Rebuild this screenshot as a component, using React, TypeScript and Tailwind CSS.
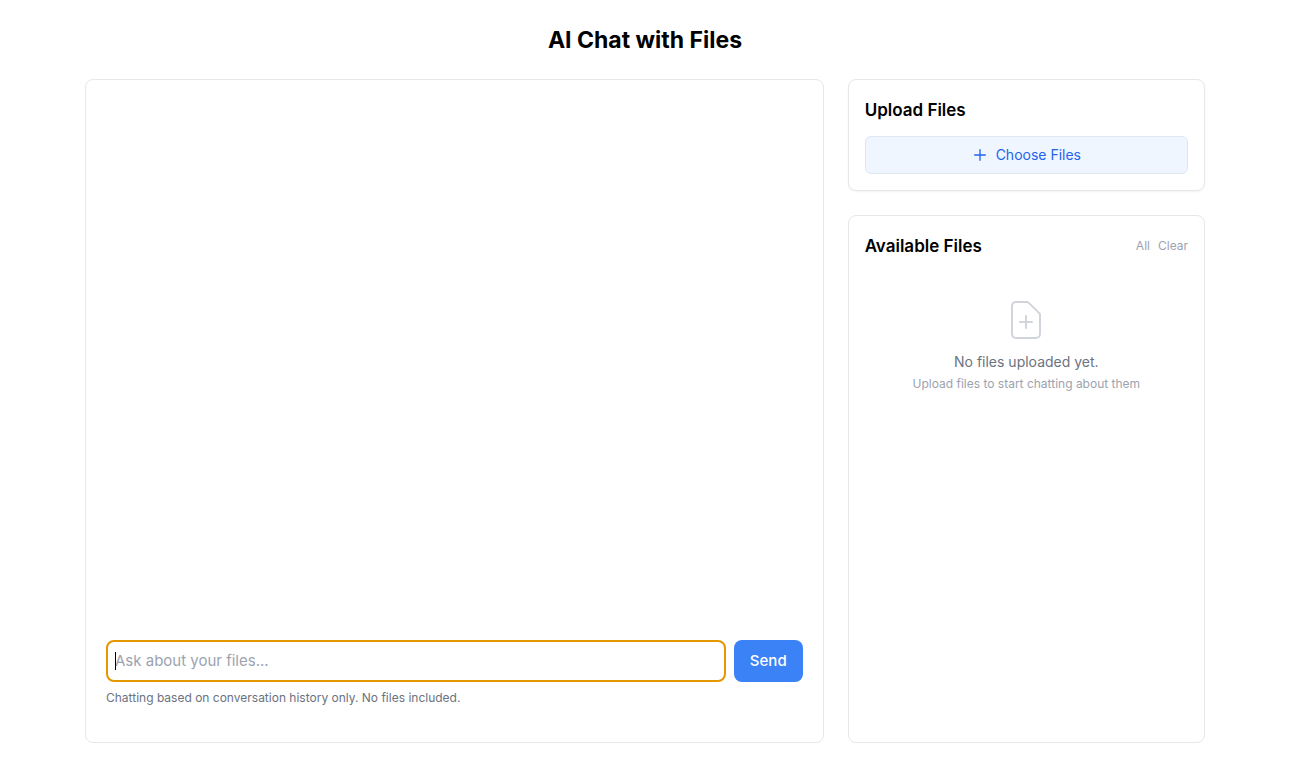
import { useState } from "react";

function UploadCard() {
  return (
    <section className="rounded-lg border border-gray-200 bg-white p-4 shadow-xs">
      <h2 className="mb-3 text-[17px] leading-7 font-semibold">Upload Files</h2>
      <button
        type="button"
        className="flex w-full items-center justify-center gap-2 rounded-md border border-[#dfe6f0] bg-[#eff6ff] px-4 py-2 text-sm text-[#2563eb]"
      >
        <svg className="size-4" viewBox="0 0 24 24" fill="none" stroke="currentColor" strokeWidth="2" strokeLinecap="round" strokeLinejoin="round" aria-hidden="true">
          <path d="M12 4v16m8-8H4" />
        </svg>
        Choose Files
      </button>
    </section>
  );
}

function AvailableFilesCard() {
  return (
    <section className="flex-1 rounded-lg border border-gray-200 bg-white p-4">
      <div className="mb-3 flex items-center justify-between">
        <h2 className="text-[17px] leading-7 font-semibold">Available Files</h2>
        <div className="flex gap-2 text-xs text-[#9ca3af]">
          <button type="button">All</button>
          <button type="button">Clear</button>
        </div>
      </div>
      <div className="flex flex-col items-center py-6 text-center">
        <svg className="mb-2 size-12 text-[#d1d5db]" viewBox="0 0 24 24" fill="none" stroke="currentColor" strokeWidth="1" strokeLinecap="round" strokeLinejoin="round" aria-hidden="true">
          <path d="M9 13h6m-3-3v6m5 5H7a2 2 0 01-2-2V5a2 2 0 012-2h5.586a1 1 0 01.707.293l5.414 5.414a1 1 0 01.293.707V19a2 2 0 01-2 2z" />
        </svg>
        <p className="text-sm text-[#6b7280]">No files uploaded yet.</p>
        <p className="mt-1 text-xs text-[#9ca3af]">Upload files to start chatting about them</p>
      </div>
    </section>
  );
}

function ChatPanel() {
  const [message, setMessage] = useState("");
  return (
    <section className="flex flex-col rounded-lg border border-gray-200 bg-white p-5 lg:col-span-2">
      <div className="flex-1" />
      <form className="flex gap-2" onSubmit={(event) => event.preventDefault()}>
        <div className="relative min-w-0 flex-1">
          <input
            type="text"
            aria-label="Message"
            placeholder="Ask about your files..."
            value={message}
            onChange={(event) => setMessage(event.target.value)}
            className="block w-full rounded-lg border-2 border-[#e59700] px-[7px] py-[7px] text-[15px] leading-6 caret-transparent outline-none placeholder:text-[#9ca3af]"
          />
          {message === "" && <span className="absolute top-3 left-[9px] h-[18px] w-px bg-black" />}
        </div>
        <button type="submit" className="rounded-lg bg-[#3b82f6] px-4 text-[15px] leading-6 font-medium text-white">
          Send
        </button>
      </form>
      <p className="mt-2 mb-4 text-xs text-[#6b7280]">
        Chatting based on conversation history only. No files included.
      </p>
    </section>
  );
}

export default function App() {
  return (
    <div className="flex min-h-screen bg-white pr-[3px] font-['Inter',sans-serif] text-black">
      <main className="mx-auto flex w-full max-w-6xl flex-col px-4 py-6">
        <h1 className="mb-[23px] text-center text-[23px] leading-8 font-bold">AI Chat with Files</h1>
        <div className="grid flex-1 grid-cols-1 gap-6 lg:grid-cols-3">
          <ChatPanel />
          <aside className="flex flex-col gap-6">
            <UploadCard />
            <AvailableFilesCard />
          </aside>
        </div>
      </main>
    </div>
  );
}
